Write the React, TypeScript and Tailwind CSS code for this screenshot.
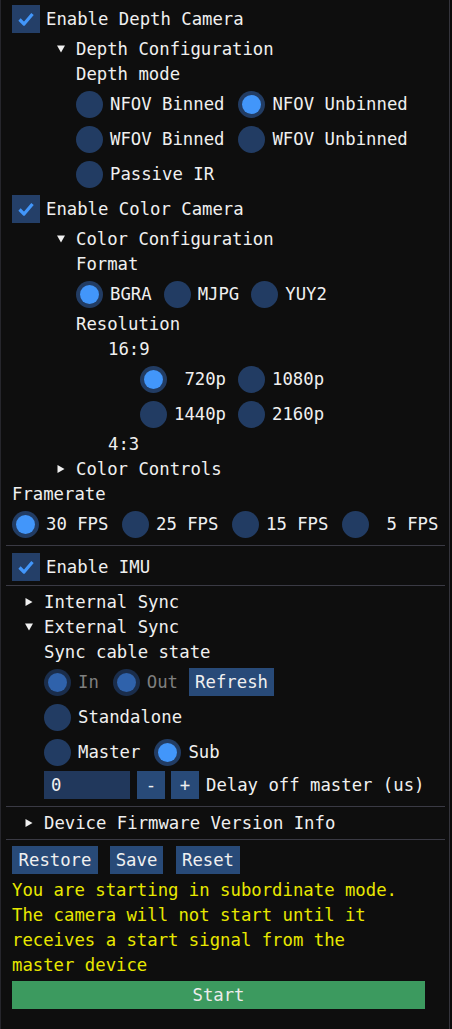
import type { ReactNode } from 'react';

function Check({ label, className = '' }: { label: string; className?: string }) {
  return (
    <div className={`flex h-[28px] items-center pl-[12px] ${className}`}>
      <span className="flex h-[28px] w-[28px] items-center justify-center bg-[#243f68]">
        <svg width="18" height="18" viewBox="0 0 18 18" aria-hidden="true">
          <path
            d="M2.5 9.5 L7 14 L15.5 4"
            fill="none"
            stroke="#4296fa"
            strokeWidth="3.2"
            strokeLinejoin="round"
          />
        </svg>
      </span>
      <span className="ml-[6px]">{label}</span>
    </div>
  );
}

function Radio({
  label,
  on = false,
  disabled = false,
}: {
  label: string;
  on?: boolean;
  disabled?: boolean;
}) {
  return (
    <span className="flex items-center">
      <span
        className={`flex h-[27px] w-[27px] items-center justify-center rounded-full ${
          disabled ? 'bg-[#1a2d4b]' : 'bg-[#223c63]'
        }`}
      >
        {on && (
          <span
            className={`h-[19px] w-[19px] rounded-full ${
              disabled ? 'bg-[#2f62ab]' : 'bg-[#4296fa]'
            }`}
          />
        )}
      </span>
      <span className={`ml-[7px] whitespace-pre ${disabled ? 'text-[#7f7f7f]' : ''}`}>
        {label}
      </span>
    </span>
  );
}

function Tree({
  label,
  open = false,
  className = '',
}: {
  label: string;
  open?: boolean;
  className?: string;
}) {
  return (
    <div className={`flex h-[18px] items-center ${className}`}>
      <svg width="8" height="8" viewBox="0 0 8 8" aria-hidden="true">
        {open ? (
          <polygon points="0,0.5 8,0.5 4,7.5" fill="#f0f0f0" />
        ) : (
          <polygon points="0.5,0 7.5,4 0.5,8" fill="#f0f0f0" />
        )}
      </svg>
      <span className="ml-[11px]">{label}</span>
    </div>
  );
}

function Btn({ children, className = '' }: { children: ReactNode; className?: string }) {
  return (
    <span className={`flex h-[28px] items-center justify-center bg-[#284a78] ${className}`}>
      {children}
    </span>
  );
}

function Sep({ className = '' }: { className?: string }) {
  return <div className={`ml-[6px] h-px w-[439px] bg-[#3a3a44] ${className}`} />;
}

export default function App() {
  return (
    <div className="h-[1029px] w-[452px] bg-[#0b0b0b] font-['DejaVu_Sans_Mono',monospace] text-[17.3px] leading-[18px] text-[#f0f0f0]">
      <div className="flex h-[1029px] w-[450px] flex-col gap-[7px] bg-[#0e0e0e] pt-[5px] shadow-[inset_1px_0_0_#26262c,inset_-1px_0_0_#34343c]">
        <Check label="Enable Depth Camera" />
        <Tree open className="pl-[57px]" label="Depth Configuration" />
        <div className="h-[18px] pl-[76px]">Depth mode</div>
        <div className="flex h-[28px] items-center gap-[14px] pl-[76px]">
          <Radio label="NFOV Binned" />
          <Radio on label="NFOV Unbinned" />
        </div>
        <div className="flex h-[28px] items-center gap-[14px] pl-[76px]">
          <Radio label="WFOV Binned" />
          <Radio label="WFOV Unbinned" />
        </div>
        <div className="flex h-[28px] items-center pl-[76px]">
          <Radio label="Passive IR" />
        </div>

        <Check label="Enable Color Camera" />
        <Tree open className="pl-[57px]" label="Color Configuration" />
        <div className="h-[18px] pl-[76px]">Format</div>
        <div className="flex h-[28px] items-center gap-[12px] pl-[76px]">
          <Radio on label="BGRA" />
          <Radio label="MJPG" />
          <Radio label="YUY2" />
        </div>
        <div className="h-[18px] pl-[76px]">Resolution</div>
        <div className="h-[18px] pl-[108px]">16:9</div>
        <div className="flex h-[28px] items-center gap-[12px] pl-[140px]">
          <Radio on label=" 720p" />
          <Radio label="1080p" />
        </div>
        <div className="flex h-[28px] items-center gap-[12px] pl-[140px]">
          <Radio label="1440p" />
          <Radio label="2160p" />
        </div>
        <div className="h-[18px] pl-[108px]">4:3</div>
        <Tree className="pl-[57px]" label="Color Controls" />
        <div className="h-[18px] pl-[12px]">Framerate</div>
        <div className="grid h-[28px] grid-cols-[110px_110px_110px_110px] items-center pl-[12px]">
          <Radio on label="30 FPS" />
          <Radio label="25 FPS" />
          <Radio label="15 FPS" />
          <Radio label=" 5 FPS" />
        </div>

        <Sep />
        <Check label="Enable IMU" />
        <Sep className="-mt-[3px]" />

        <Tree className="pl-[25px]" label="Internal Sync" />
        <Tree open className="pl-[25px]" label="External Sync" />
        <div className="h-[18px] pl-[44px]">Sync cable state</div>
        <div className="flex h-[28px] items-center pl-[44px]">
          <Radio on disabled label="In" />
          <span className="ml-[14px]">
            <Radio on disabled label="Out" />
          </span>
          <Btn className="ml-[11px] w-[85px]">Refresh</Btn>
        </div>
        <div className="flex h-[28px] items-center pl-[44px]">
          <Radio label="Standalone" />
        </div>
        <div className="flex h-[28px] items-center gap-[14px] pl-[44px]">
          <Radio label="Master" />
          <Radio on label="Sub" />
        </div>
        <div className="-mt-[2px] flex h-[28px] items-center pl-[44px]">
          <span className="flex h-[28px] w-[86px] items-center bg-[#21385c] pl-[7px]">0</span>
          <Btn className="ml-[7px] w-[28px]">-</Btn>
          <Btn className="ml-[6px] w-[28px]">+</Btn>
          <span className="ml-[7px]">Delay off master (us)</span>
        </div>

        <Sep />
        <Tree className="pl-[25px]" label="Device Firmware Version Info" />
        <Sep />

        <div className="-mt-[1px] flex h-[28px] items-center pl-[12px]">
          <Btn className="w-[86px]">Restore</Btn>
          <Btn className="ml-[12px] w-[53px]">Save</Btn>
          <Btn className="ml-[13px] w-[64px]">Reset</Btn>
        </div>
        <div className="h-[18px] pl-[12px] text-[#e8e800]">You are starting in subordinate mode.</div>
        <div className="h-[18px] pl-[12px] text-[#e8e800]">The camera will not start until it</div>
        <div className="h-[18px] pl-[12px] text-[#e8e800]">receives a start signal from the</div>
        <div className="h-[18px] pl-[12px] text-[#e8e800]">master device</div>
        <div className="pl-[12px]">
          <span className="flex h-[28px] w-[413px] items-center justify-center bg-[#3c9a5f] text-[#ececec]">
            Start
          </span>
        </div>
      </div>
    </div>
  );
}
